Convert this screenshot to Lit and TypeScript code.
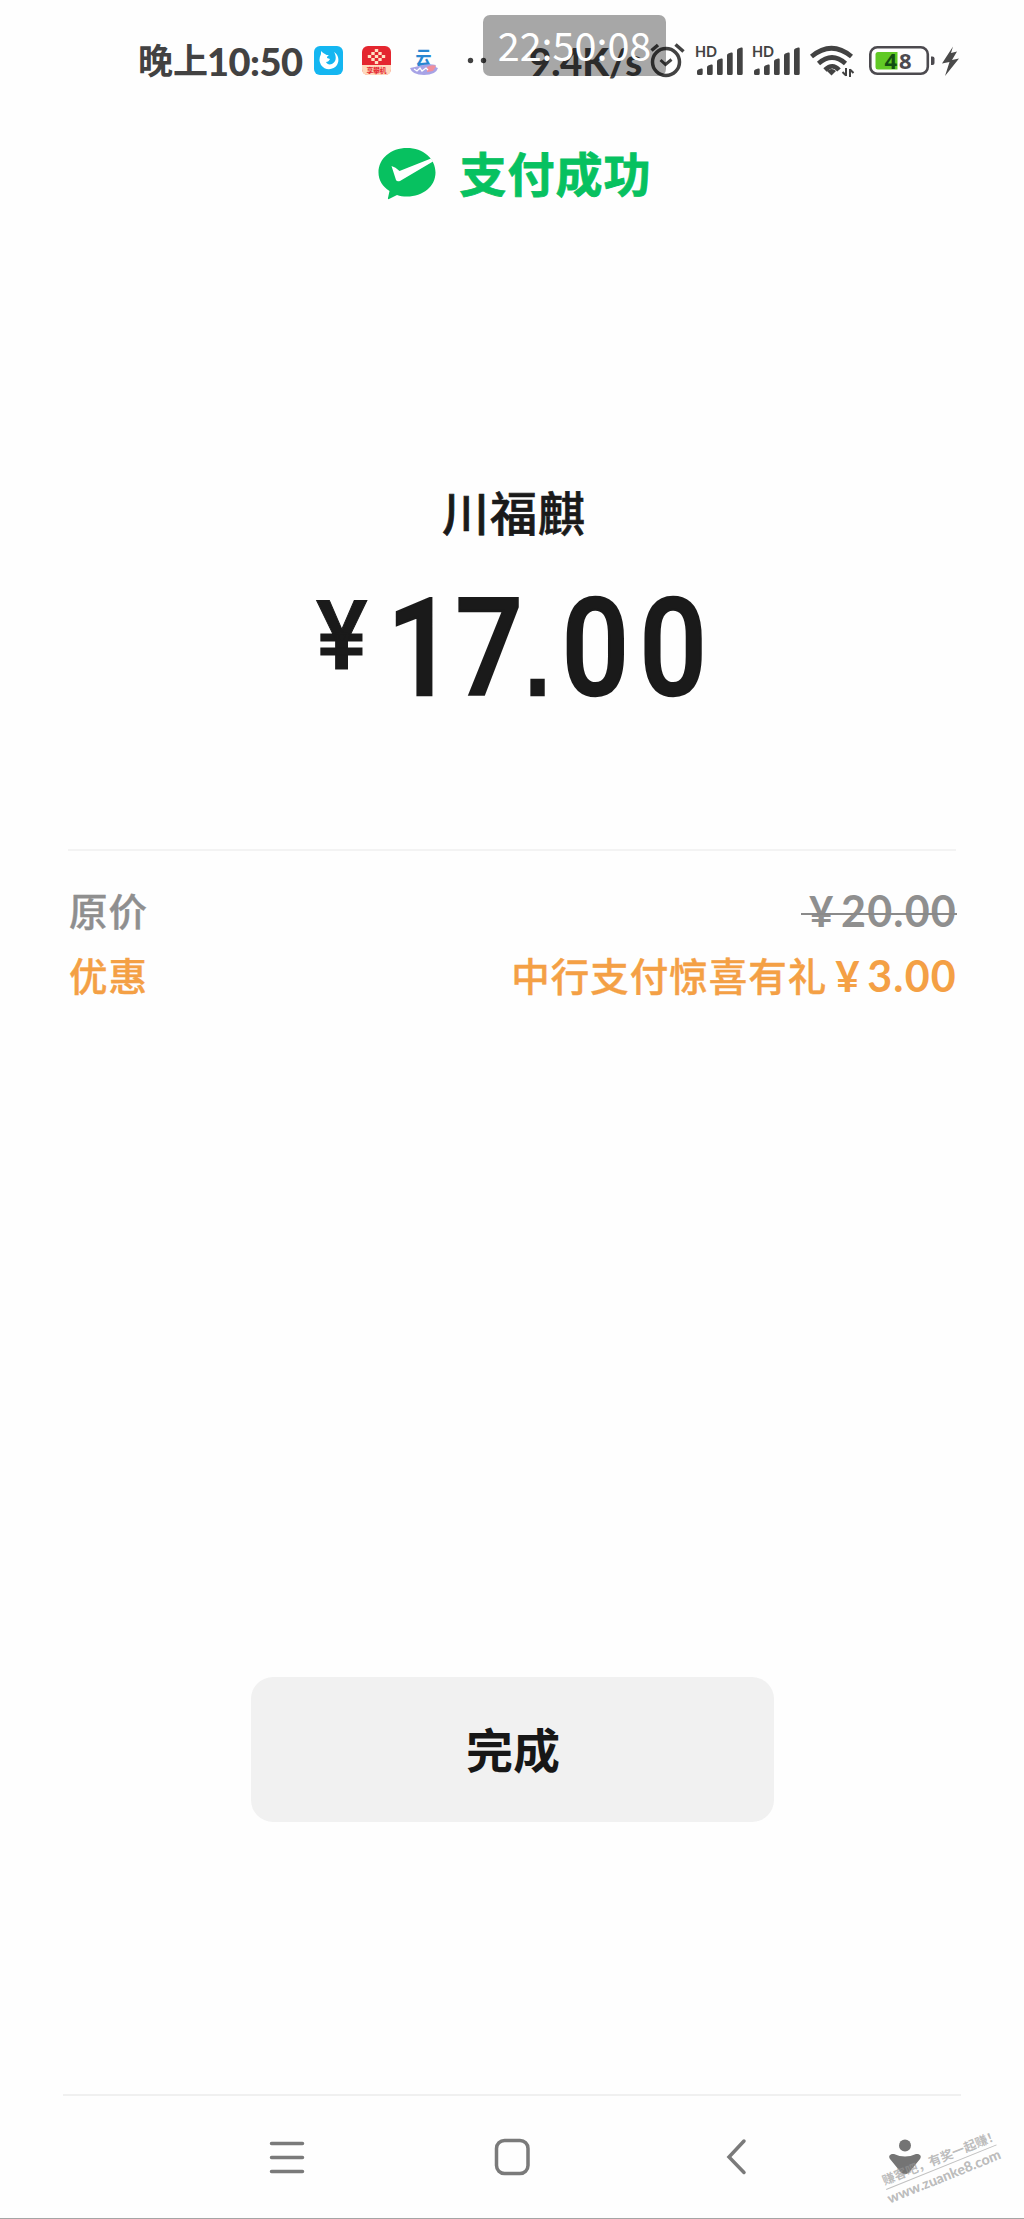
import { LitElement, html, css, svg } from "lit";
import { customElement, property } from "lit/decorators.js";

@customElement("status-bar")
class StatusBar extends LitElement {
  static styles = css`
    :host { display: block; position: relative; height: 100px; color: #424242; }
    .row { display: flex; align-items: flex-start; padding: 43px 0 0 138px; height: 36px; }
    svg { display: block; flex: none; overflow: visible; }
    .time { width: 176px; flex: none; display: flex; align-items: flex-start; height: 36px; white-space: nowrap; font: 700 35px/32px "Noto Sans CJK SC", sans-serif; }
    .clock { font: 900 38px/36px Lato, sans-serif; letter-spacing: -0.5px; margin-left: -1px; }
    .apps { display: flex; gap: 18.5px; width: 153px; flex: none; }
    .dots { width: 62px; flex: none; }
    .speed { width: 122px; flex: none; font: 900 38.5px/36px Lato, sans-serif; letter-spacing: -0.2px; white-space: nowrap; }
    .alarm { width: 44px; flex: none; }
    .signal { width: 57px; flex: none; }
    .wifi { width: 60px; flex: none; }
    .hd { font: 700 15px Lato, sans-serif; }
    .level { font: 700 22px "Noto Sans", sans-serif; }
    .tiny { font: 700 7px "Noto Sans CJK SC", sans-serif; }
    .cloud { font: 700 19px "Noto Sans CJK SC", sans-serif; }
    .stamp { position: absolute; left: 483px; top: 15px; width: 183px; height: 61px; border-radius: 7px; background: rgba(0, 0, 0, 0.34); color: #fff; text-align: center; font: 400 39.5px/57px "Noto Sans CJK SC", sans-serif; }
  `;

  private signal() {
    const tops = [25, 21, 15, 9, 4];
    return html`<svg class="signal" width="57" height="36" viewBox="0 0 57 36" fill="#424242">
      <text class="hd" x="0" y="14" textLength="22" lengthAdjust="spacingAndGlyphs">HD</text>
      ${tops.map((t, i) => svg`<path d="M${2 + i * 10} ${t + 3.5}q0-1.5 1.3-2l2.8-1q1.600-.5 1.600 1V30.500q0 1.500-1.500 1.500h-2.700q-1.500 0-1.500-1.500z"/>`)}
    </svg>`;
  }

  render() {
    return html`
      <div class="row">
        <div class="time"><span>晚上</span><span class="clock">10:50</span></div>
        <div class="apps">
          <svg width="29" height="36" viewBox="0 0 29 36">
            <rect y="3" width="29" height="29" rx="6" fill="#14b6f1"/>
            <path d="M7 11q-3 6 0 11c4 6 13 5 16 0 3-5 1-11-3-13 3 5 2 10-2 12-3 1-5 0-6-2 2 0 3-1 4-3l-3-1c0-2 1-2 2-3-2 0-3 0-4-1-2-1-3-2-4-3z" fill="#fff"/>
          </svg>
          <svg width="29" height="36" viewBox="0 0 29 36">
            <rect y="3" width="29" height="29" rx="6" fill="#e4262f"/>
            <path d="M0 22h29v4q0 6-6 6H6q-6 0-6-6z" fill="#ffd9bd"/>
            ${[[14.5, 7.5], [11, 10.500], [18, 10.500], [7.500, 13.500], [14.500, 13.500], [21.500, 13.500], [11, 16.500], [18, 16.500], [14.500, 19.500]].map(
              ([x, y]) => svg`<rect x=${x - 1.7} y=${y - 1.6} width="3.400" height="3.200" rx=".6" fill="#ffe3c4"/>`)}
            <text class="tiny" x="4.500" y="30" textLength="20" fill="#e4262f">享攀机</text>
          </svg>
          <svg width="29" height="36" viewBox="0 0 29 36">
            <text class="cloud" x="6.500" y="21.500" textLength="16" lengthAdjust="spacingAndGlyphs" fill="#2787d2">云</text>
            <path d="M1 25q5-1 9-2 9-3 17-1-2 2 2 3-2 7-14 7T1 25z" fill="#a7a3e6"/>
            <path d="M18 24q5-3 9-1l-3 5-6 1z" fill="#f08f9d"/>
            <path d="M5 26l3 2 3-3 2 3 4-3 2 2" fill="none" stroke="#fff" stroke-width="1.300"/>
          </svg>
        </div>
        <svg class="dots" width="62" height="36" viewBox="0 0 62 36" fill="#424242">
          <circle cx="3.500" cy="17.500" r="2.700"/><circle cx="16.500" cy="17.500" r="2.700"/>
        </svg>
        <div class="speed">9.4K/s</div>
        <svg class="alarm" width="44" height="36" viewBox="0 0 44 36" fill="none" stroke="#424242" stroke-width="3.500">
          <circle cx="15" cy="19" r="13.500"/>
          <path d="M9.500 17l5 4.500 6-5" stroke-width="3"/>
          <path d="M.5 7.500l6.500-5.500M24.500 1.500l8 7"/>
        </svg>
        ${this.signal()}${this.signal()}
        <svg class="wifi" width="60" height="36" viewBox="0 0 60 36" fill="none" stroke="#424242" stroke-width="4.700">
          <path d="M2.500 13.500q20-16.500 40 0M9.500 20.500q13.500-12 27 0M16 27q7.500-7.500 14 0" />
          <path d="M18 28q4.500-4 9 0l-4.500 4.500z" fill="#424242" stroke="none"/>
          <path d="M37 25v8M37 32.500l-3.500-3.500M41 34v-8M41 26.500l3.500 3.500" stroke-width="2"/>
        </svg>
        <svg width="92" height="36" viewBox="0 0 92 36">
          <rect x="1.300" y="4.300" width="57.500" height="26.500" rx="7" fill="none" stroke="#4c4a4f" stroke-width="2.600"/>
          <path d="M62 13.500h1.500q2 0 2 2v4.500q0 2-2 2H62z" fill="#4c4a4f"/>
          <path d="M9 9h19.500v17.500H9q-2.500 0-2.500-2.500V11.500Q6.500 9 9 9z" fill="#60c925"/>
          <text class="level" x="15.500" y="25.500" fill="#124d12">4</text>
          <text class="level" x="30" y="25.500" fill="#4c4a4f">8</text>
          <path d="M84 3.500L73 20.500l7.500-1.500-4.500 14L90 15.500l-7 1.500 5-8.500-6 1.500z" fill="#4a4a4a"/>
        </svg>
      </div>
      <div class="stamp">22:50:08</div>
    `;
  }
}

@customElement("price-row")
class PriceRow extends LitElement {
  static styles = css`
    :host { display: flex; justify-content: space-between; height: 65px; line-height: 60px; font-family: "Noto Sans CJK SC", sans-serif; font-size: 38.5px; font-weight: 500; letter-spacing: 1px; white-space: nowrap; -webkit-text-stroke: 0.4px currentColor; }
    .label { padding-left: 1px; }
    .value { display: flex; align-items: flex-start; }
    .note { margin-right: 8px; }
    .money { display: flex; align-items: center; position: relative; line-height: 64px; font-family: Lato, sans-serif; font-size: 43px; font-weight: 700; letter-spacing: 1.2px; margin-right: -1px; -webkit-text-stroke: 0; }
    .yen { width: 32px; font-size: 42px; letter-spacing: 0; }
    .struck { padding-left: 8px; }
    .struck::after { content: ""; position: absolute; left: 0; right: 0; top: 34px; height: 2px; background: #8a8a8a; }
  `;
  @property() label = "";
  @property() note = "";
  @property() amount = "";
  @property({ type: Boolean }) struck = false;

  render() {
    return html`<span class="label">${this.label}</span>
      <span class="value"><span class="note">${this.note}</span><span class="money ${this.struck ? "struck" : ""}"><span class="yen">¥</span><span>${this.amount}</span></span></span>`;
  }
}

@customElement("app-root")
class AppRoot extends LitElement {
  static styles = css`
    :host { display: flex; flex-direction: column; position: relative; box-sizing: border-box; width: 1024px; height: 2219px; overflow: hidden; background: #fefefe; border-bottom: 1px solid #a5a5a5; font-family: "Noto Sans CJK SC", sans-serif; color: #1a1a1a; }
    svg { display: block; flex: none; overflow: visible; }
    .result { display: flex; align-items: flex-start; justify-content: center; height: 148px; padding: 48px 0 0 5px; box-sizing: border-box; gap: 24px; color: #07c160; font-size: 47px; font-weight: 700; letter-spacing: 1px; -webkit-text-stroke: 0.8px currentColor; }
    .result span { line-height: 47px; }
    .merchant { margin-top: 228px; height: 72px; line-height: 70px; text-align: center; font-size: 47px; font-weight: 500; letter-spacing: 1px; padding-left: 4px; -webkit-text-stroke: 0.7px currentColor; }
    .total { display: flex; align-items: flex-start; height: 160px; margin-top: 18px; padding-left: 316px; font-family: Roboto, sans-serif; font-weight: 500; }
    .yen { font-size: 97px; line-height: 141px; width: 71px; -webkit-text-stroke: 1px currentColor; }
    .num { font-size: 136px; line-height: 166px; height: 160px; transform: scaleX(0.87); transform-origin: 0 0; white-space: nowrap; -webkit-text-stroke: 2.4px currentColor; }
    .one { letter-spacing: 1.5px; }
    .seven { letter-spacing: 3px; }
    .point { font: 700 100px "Liberation Sans", sans-serif; line-height: 0; letter-spacing: 14px; }
    .zero { letter-spacing: 12px; }
    .details { margin: 123px 68px 0; padding-top: 28px; border-top: 2px solid #f3f3f3; }
    .original { color: #8f8f8f; }
    .discount { color: #f4a045; }
    .done { align-self: center; margin: 668px 0 0; width: 523px; height: 145px; border: 0; border-radius: 22px; background: #f1f1f1; color: #171717; font: 700 47px/138px "Noto Sans CJK SC", sans-serif; padding: 0 0 4px 2px; }
    .nav { margin: 272px 63px 0; border-top: 2px solid #f0f0f0; display: flex; padding: 40px 0 0 205px; }
    .home { margin-left: 188.5px; }
    .back { margin-left: 196.5px; }
    .person { margin-left: 142px; }
    .mark { position: absolute; left: 886px; top: 2171px; width: 119px; transform: rotate(-22deg); transform-origin: 0 18px; color: rgba(150, 150, 150, 0.65); }
    .slogan { font-size: 12.5px; line-height: 18px; font-weight: 700; white-space: nowrap; border-bottom: 1px solid rgba(150, 150, 150, 0.6); }
    .site { font: 900 14.2px/18px Lato, sans-serif; white-space: nowrap; margin-left: -2px; }
  `;

  render() {
    return html`
      <status-bar></status-bar>
      <div class="result">
        <svg width="58" height="52" viewBox="0 0 58 52" stroke="none">
          <path d="M29 0c16 0 28.500 10.500 28.500 24.500S45 48.500 29 48.500c-4 0-7-.5-10-1.500l-8 4q-1.500.5-1-1l1.500-7C4.500 38.500.5 32 .5 24.500.5 10.500 13 0 29 0z" fill="#07c160"/>
          <path d="M13.500 18q4 1 8 5L53 10.500l2 3-33 19.500q-3 1-4-1z" fill="#fff"/>
        </svg>
        <span>支付成功</span>
      </div>
      <div class="merchant">川福麒</div>
      <div class="total"><span class="yen">¥</span><div class="num"><span class="one">1</span><span class="seven">7</span><span class="point">.</span><span class="zero">00</span></div></div>
      <div class="details">
        <price-row class="original" label="原价" amount="20.00" struck></price-row>
        <price-row class="discount" label="优惠" note="中行支付惊喜有礼" amount="3.00"></price-row>
      </div>
      <button class="done">完成</button>
      <div class="nav">
        <svg width="38" height="40" viewBox="0 0 38 40" stroke="#7a7a7a" stroke-width="3.500" stroke-linecap="round"><path d="M3.500 7.500h31M3.500 21.500h31M3.500 35.500h31"/></svg>
        <svg class="home" width="36" height="40" viewBox="0 0 36 40" fill="none" stroke="#7a7a7a" stroke-width="3.500"><rect x="1.500" y="4.500" width="31.500" height="33" rx="8"/></svg>
        <svg class="back" width="20" height="40" viewBox="0 0 20 40" fill="none" stroke="#7a7a7a" stroke-width="3.500" stroke-linecap="round"><path d="M17 5L2 21l15 15.500"/></svg>
        <svg class="person" width="32" height="40" viewBox="0 0 32 40" fill="#747474"><circle cx="16" cy="9.500" r="6"/><path d="M5 18q11 5 22 0c4-.5 6 2 4 5L20 36.500q-4 3.500-8 0L1 23c-2-3 0-5.500 4-5z"/></svg>
      </div>
      <div class="mark"><div class="slogan">赚客吧，有奖一起赚！</div><div class="site">www.zuanke8.com</div></div>
    `;
  }
}
